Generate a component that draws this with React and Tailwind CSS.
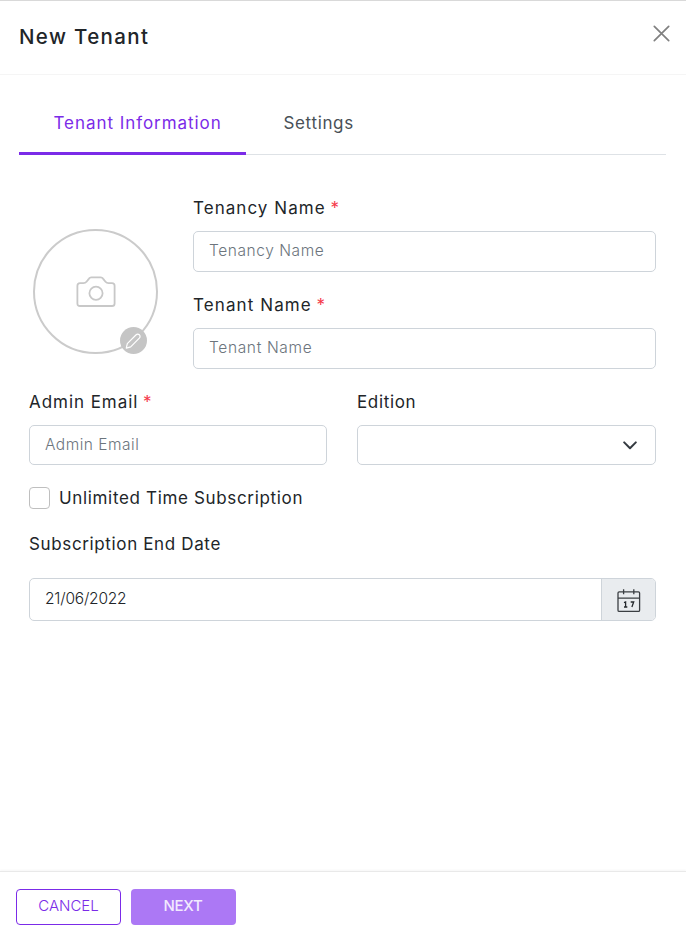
import React from "react";

function Label({ children, required, className = "" }) {
  return (
    <label className={`block h-6 whitespace-nowrap text-[17px] leading-6 text-[#212529] ${className}`}>
      {children}
      {required && <span className="tracking-normal text-[#f5384a]"> *</span>}
    </label>
  );
}

const inputClass =
  "block w-full rounded-[5px] border border-[#ced4da] bg-white px-[15px] pb-0.5 text-[15.5px] font-light text-[#212529] outline-none placeholder:text-[#6c757d] placeholder:opacity-100";

function CameraIcon() {
  return (
    <svg width="40" height="32" viewBox="0 0 40 32" fill="none" stroke="#c8c8c8" strokeWidth="1.8">
      <path d="M4 7.2H7.4C8.8 7.2 9.7 6.8 10.5 5.8L13 2.6C13.6 1.7 14.2 1.4 15.2 1.4H24.8C25.8 1.4 26.4 1.7 27 2.6L29.5 5.8C30.3 6.8 31.2 7.2 32.6 7.2H36C37.8 7.2 38.6 8.1 38.6 9.8V27.4C38.6 29.1 37.8 30 36 30H4C2.2 30 1.4 29.1 1.4 27.4V9.8C1.4 8.1 2.2 7.2 4 7.2Z" />
      <circle cx="20" cy="17.2" r="6.6" />
    </svg>
  );
}

function PencilIcon() {
  return (
    <svg width="26" height="26" viewBox="0 0 26 26" fill="none" stroke="white" strokeWidth="1.2" strokeLinejoin="round" strokeLinecap="round">
      <path d="M6.3 20.1L7.3 15.6L15.9 7C17 5.9 18.4 6 19.3 6.8C20.3 7.7 20.3 9.1 19.3 10.2L10.7 18.9Z" />
    </svg>
  );
}

function CalendarIcon() {
  return (
    <svg width="24" height="24" viewBox="0 0 24 24" fill="none" stroke="#3b3f43" strokeWidth="1.3">
      <rect x="1" y="2.8" width="21.6" height="19.6" rx="1.2" />
      <path d="M1 9.2H22.6M6.6 .3V5.2M16.8 .3V5.2" />
      <path d="M7 13.6L8.6 12.9V18M7 18H10.3M13.7 13H16.7L14.9 18" stroke="#24282c" />
    </svg>
  );
}

export default function App() {
  return (
    <div className="flex h-[942px] w-[686px] flex-col overflow-hidden border-t border-[#d9d9d9] bg-white font-['Inter','Noto_Sans',sans-serif] text-[#212529]">
      <header className="flex h-[74px] shrink-0 items-start justify-between border-b border-[#f5f5f5] pl-[19px] pr-4">
        <h1 className="mt-[22px] whitespace-nowrap text-[20.5px] font-medium leading-7 tracking-[1.35px]">New Tenant</h1>
        <button type="button" aria-label="Close" className="mt-6">
          <svg width="17" height="17" viewBox="0 0 17 17" fill="none" stroke="#808080" strokeWidth="1.7" strokeLinecap="round">
            <path d="M1.3 1.3L15.7 15.7M15.7 1.3L1.3 15.7" />
          </svg>
        </button>
      </header>

      <main className="flex flex-1 flex-col px-[19px] pt-[17px]">
        <nav className="mr-px flex h-[63px] items-stretch border-b border-[#dee2e6] text-[17px] leading-6">
          <button type="button" className="mb-[-1px] flex w-[227px] items-start border-b-3 border-[#7b2be8] pl-[34.5px] pt-[19px] text-left">
            <span className="whitespace-nowrap tracking-[0.95px] text-[#7b2be8]">Tenant Information</span>
          </button>
          <button type="button" className="flex items-start pl-[37.5px] pt-[19px]">
            <span className="whitespace-nowrap tracking-[0.65px] text-[#495057]">Settings</span>
          </button>
        </nav>

        <form className="ml-2.5 mr-[11px] mt-[41px] flex flex-col">
          <div className="flex">
            <div className="w-[164px] pl-1 pt-[33px]">
              <div className="relative flex h-[125px] w-[125px] items-center justify-center rounded-full border-2 border-[#cbcbcb]">
                <CameraIcon />
                <span className="absolute bottom-[-2px] right-[9.5px] flex size-[27px] items-center justify-center rounded-full bg-[#c5c5c5]">
                  <PencilIcon />
                </span>
              </div>
            </div>
            <div className="flex-1">
              <Label required className="tracking-[1.05px]">Tenancy Name</Label>
              <input className={`mt-[11px] h-[41px] tracking-[0.57px] ${inputClass}`} placeholder="Tenancy Name" />
              <Label required className="mt-[21px] tracking-[1.1px]">Tenant Name</Label>
              <input className={`mt-[11px] h-[41px] tracking-[0.65px] ${inputClass}`} placeholder="Tenant Name" />
            </div>
          </div>

          <div className="mt-[21px] grid grid-cols-[298px_299px] gap-[30px]">
            <div>
              <Label required className="tracking-[0.95px]">Admin Email</Label>
              <input className={`mt-[11px] h-10 tracking-[0.5px] ${inputClass}`} placeholder="Admin Email" />
            </div>
            <div>
              <Label className="tracking-[0.65px]">Edition</Label>
              <div className="mt-[11px] flex h-10 items-center justify-end rounded-[5px] border border-[#ced4da] pr-[18px]">
                <svg width="14" height="9" viewBox="0 0 14 9" fill="none" stroke="#343a40" strokeWidth="2" strokeLinecap="round" strokeLinejoin="round">
                  <path d="M1.2 1.4L7 7.2L12.8 1.4" />
                </svg>
              </div>
            </div>
          </div>

          <div className="mt-[21px] flex h-6 items-center">
            <input type="checkbox" className="h-[22px] w-[21px] appearance-none rounded-[4px] border border-[#bfbfbf]" />
            <Label className="ml-[9px] tracking-[0.66px]">Unlimited Time Subscription</Label>
          </div>

          <Label className="mt-[22px] tracking-[0.64px]">Subscription End Date</Label>
          <div className="mt-[22px] flex h-[43px] overflow-hidden rounded-[5px] border border-[#ced4da]">
            <input className="min-w-0 flex-1 px-[15px] pb-0.5 text-[15.5px] font-light tracking-[-0.2px] outline-none" defaultValue="21/06/2022" />
            <span className="flex w-[54px] items-center justify-center border-l border-[#ced4da] bg-[#e9ecef] pt-0.5">
              <CalendarIcon />
            </span>
          </div>
        </form>
      </main>

      <footer className="flex h-[71px] shrink-0 gap-2.5 border-t border-[#e9e9e9] pl-4 pt-[17px] shadow-[0_-1px_2px_rgba(0,0,0,0.04)]">
        <button type="button" className="h-9 w-[105px] rounded-[4px] border border-[#7b2be8] pb-px text-[15px] font-light text-[#7b2be8]">CANCEL</button>
        <button type="button" className="h-9 w-[105px] rounded-[4px] bg-[#ac78f5] pb-px pr-px text-[15px] font-medium tracking-[-0.3px] text-[#f2eafe]">NEXT</button>
      </footer>
    </div>
  );
}
